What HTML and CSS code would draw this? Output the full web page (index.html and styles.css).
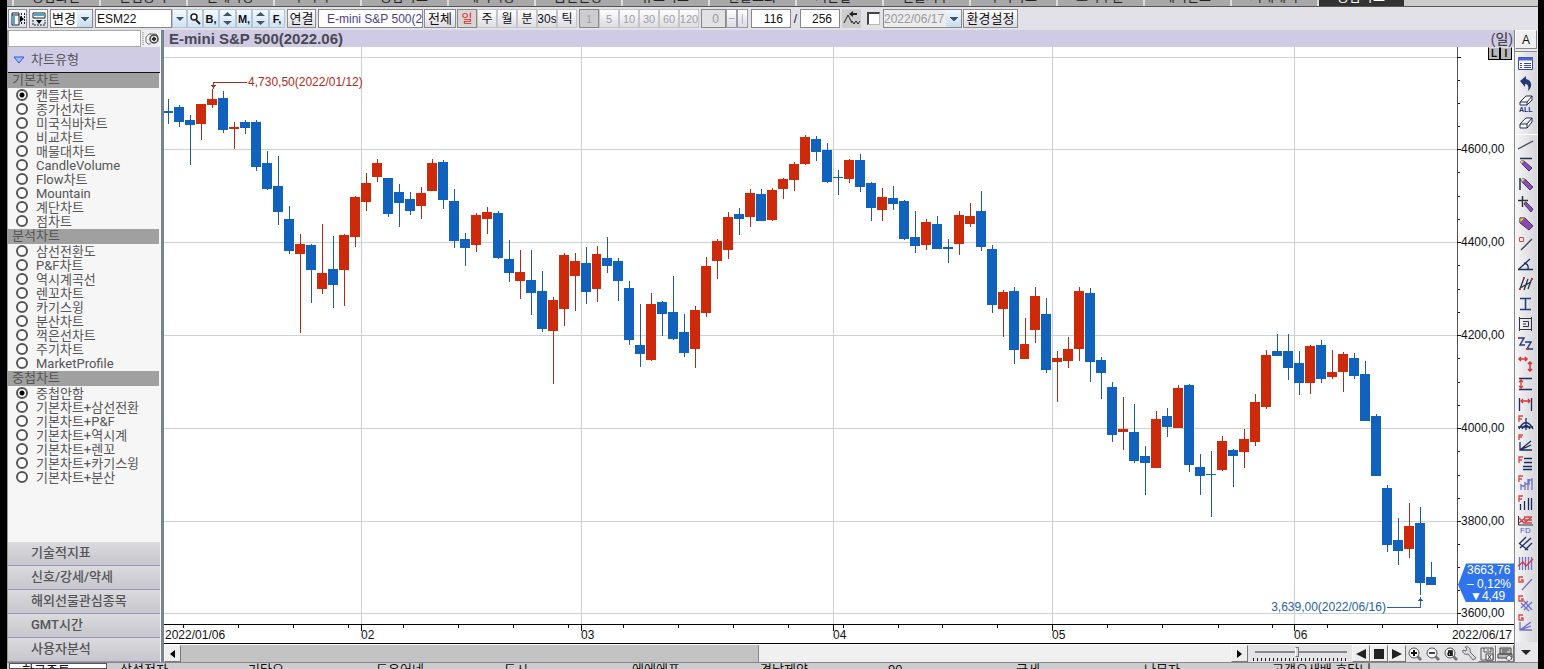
FILE: index.html
```html
<!DOCTYPE html>
<html lang="ko">
<head>
<meta charset="utf-8">
<title>E-mini S&amp;P 500</title>
<link rel="stylesheet" href="styles.css">
</head>
<body>
<div class="app">
  <nav class="tabs">
    <a class="tab" href="#">종합화면</a><a class="tab" href="#">관심종목</a><a class="tab" href="#">현재가창</a><a class="tab" href="#">주식시</a><a class="tab" href="#">종합차트</a><a class="tab" href="#">해외시황</a><a class="tab" href="#">금일일정</a><a class="tab" href="#">뉴스속보</a><a class="tab" href="#">환율조회</a><a class="tab" href="#">기간별</a><a class="tab" href="#">선물지수</a><a class="tab" href="#">주가차트</a><a class="tab" href="#">호가주문</a><a class="tab" href="#">해외잔고</a><a class="tab" href="#">거래내역</a><a class="tab active" href="#">종합차트</a>
    <span class="tab-end"></span>
  </nav>

  <header class="toolbar">
    <button class="btn sq" aria-label="패널 열기"><svg width="16" height="16"><path d="M2 2h7v12H2zM2 4h7" fill="#fff" stroke="#123"/><path d="M3 3h2v10H3z" fill="#4aa8c8"/><path d="M11.500 2v12M14.500 2v12" stroke="#123" stroke-dasharray="2 1"/><path d="M10 5l4 3-4 3z"/></svg></button>
    <button class="btn sq" aria-label="패널 내리기"><svg width="16" height="16"><path d="M2 2h12v5H2z" fill="#fff" stroke="#123"/><path d="M3 3h10v2H3z" fill="#4aa8c8"/><path d="M2 9v5h12V9" fill="none" stroke="#123" stroke-dasharray="2 1"/><path d="M5 9h6l-3 4z"/></svg></button>
    <select class="combo change" aria-label="변경"><option>변경</option></select>
    <input class="field code" aria-label="종목코드" value="ESM22"><button class="btn blue arrow" aria-label="종목 목록"><svg width="8" height="4"><path d="M0 0h8L4 4z" fill="#456"/></svg></button><button class="btn blue s15" aria-label="검색"><svg width="12" height="14"><circle cx="5" cy="5" r="3" fill="#fff" stroke="#222" stroke-width="1.5"/><path d="M7 8l4 4" stroke="#222" stroke-width="2"/></svg></button><button class="btn blue s15">B,</button><button class="btn blue spin" aria-label="B 조정"><svg width="9" height="13"><path d="M0 4h9L4.500 0zM0 9h9l-4.500 4z" fill="#456"/></svg></button><button class="btn blue s15">M,</button><button class="btn blue spin" aria-label="M 조정"><svg width="9" height="13"><path d="M0 4h9L4.500 0zM0 9h9l-4.500 4z" fill="#456"/></svg></button><button class="btn blue s15">F,</button>
    <button class="btn link">연결</button>
    <input class="field name" aria-label="종목명" value="E-mini S&amp;P 500(2022.06)">
    <button class="btn all">전체</button>
    <div class="group"><button class="btn p on">일</button><button class="btn p">주</button><button class="btn p">월</button><button class="btn p">분</button><button class="btn p">30s</button><button class="btn p">틱</button></div>
    <div class="group off"><button class="btn p on" disabled>1</button><button class="btn p" disabled>5</button><button class="btn p" disabled>10</button><button class="btn p" disabled>30</button><button class="btn p" disabled>60</button><button class="btn p" disabled>120</button></div>
    <div class="stepper"><input class="field zero" aria-label="분 단위" value="0" disabled><button class="btn tiny" aria-label="감소">─</button><button class="btn tiny" aria-label="증가">│</button></div>
    <input class="field num" aria-label="표시 개수" value="116"><span class="slash">/</span><input class="field num" aria-label="전체 개수" value="256">
    <button class="btn sq wave" aria-label="갱신"><svg width="18" height="17"><path d="M1 13l4-8 4 8M9 11l2 3 2-3 2 3 2-3" fill="none" stroke="#222"/><path d="M8 3h6v2H8zM10 1v6L6 4z" fill="#222"/></svg></button>
    <input class="check" type="checkbox" aria-label="기준일 사용">
    <select class="combo date" aria-label="기준일" disabled><option>2022/06/17</option></select>
    <button class="btn prefs">환경설정</button>
  </header>

  <div class="work">
    <aside class="sidebar">
      <div class="search"><input aria-label="차트 검색"><button aria-label="찾기"><svg width="18" height="16"><path d="M1 1v14" stroke="#777" stroke-dasharray="1 1"/><path d="M9 3H7L4 6v5l2 2h3M8 3h6l2 2" fill="none" stroke="#777"/><circle cx="12" cy="8" r="4" fill="#ddd" stroke="#444" stroke-width="1.5"/><path d="M10 8h4M12 6v4" stroke="#333" stroke-width="2"/></svg></button></div>
      <h2 class="side-title"><svg width="12" height="8"><path d="M1 1h10l-5 6z" fill="#9cc0f8" stroke="#3657d0"/></svg>차트유형</h2>
      <div class="lists">
        <h3>기본차트</h3>
        <ul>
          <li><label><input type="radio" name="kind" checked>캔들차트</label></li>
          <li><label><input type="radio" name="kind">종가선차트</label></li>
          <li><label><input type="radio" name="kind">미국식바차트</label></li>
          <li><label><input type="radio" name="kind">비교차트</label></li>
          <li><label><input type="radio" name="kind">매물대차트</label></li>
          <li><label><input type="radio" name="kind">CandleVolume</label></li>
          <li><label><input type="radio" name="kind">Flow차트</label></li>
          <li><label><input type="radio" name="kind">Mountain</label></li>
          <li><label><input type="radio" name="kind">계단차트</label></li>
          <li><label><input type="radio" name="kind">점차트</label></li>
        </ul>
        <h3>분석차트</h3>
        <ul>
          <li><label><input type="radio" name="kind">삼선전환도</label></li>
          <li><label><input type="radio" name="kind">P&amp;F차트</label></li>
          <li><label><input type="radio" name="kind">역시계곡선</label></li>
          <li><label><input type="radio" name="kind">렌꼬차트</label></li>
          <li><label><input type="radio" name="kind">카기스윙</label></li>
          <li><label><input type="radio" name="kind">분산차트</label></li>
          <li><label><input type="radio" name="kind">꺽은선차트</label></li>
          <li><label><input type="radio" name="kind">주기차트</label></li>
          <li><label><input type="radio" name="kind">MarketProfile</label></li>
        </ul>
        <h3>중첩차트</h3>
        <ul>
          <li><label><input type="radio" name="over" checked>중첩안함</label></li>
          <li><label><input type="radio" name="over">기본차트+삼선전환</label></li>
          <li><label><input type="radio" name="over">기본차트+P&amp;F</label></li>
          <li><label><input type="radio" name="over">기본차트+역시계</label></li>
          <li><label><input type="radio" name="over">기본차트+렌꼬</label></li>
          <li><label><input type="radio" name="over">기본차트+카기스윙</label></li>
          <li><label><input type="radio" name="over">기본차트+분산</label></li>
        </ul>
      </div>
      <button class="acc">기술적지표</button>
      <button class="acc">신호/강세/약세</button>
      <button class="acc">해외선물관심종목</button>
      <button class="acc">GMT시간</button>
      <button class="acc">사용자분석</button>
    </aside>

    <main class="chart">
      <div class="chart-title"><h1>E-mini S&amp;P 500(2022.06)</h1><span>(일)</span></div>
      <div class="chart-body">
        <div class="plot">
          <svg id="plot" viewBox="0 0 1293 577" preserveAspectRatio="none"></svg>
          <span class="note high">4,730,50(2022/01/12)</span>
          <span class="note low">3,639,00(2022/06/16)</span>
        </div>
        <div class="yaxis">
          <svg id="yticks" viewBox="0 0 57 577" preserveAspectRatio="none"></svg>
          <div id="ylabels"></div>
          <div class="mini"><button>L</button><button>I</button></div>
          <div class="price"><b>3663,76</b><b>– 0,12%</b><b>▼4,49</b></div>
        </div>
      </div>
      <div class="xaxis">
        <svg id="xticks" viewBox="0 0 1350 19" preserveAspectRatio="none"></svg>
        <div id="xlabels"></div>
        <span class="last">2022/06/17</span>
      </div>
      <div class="controls">
        <button class="cb" aria-label="왼쪽"><svg width="5" height="8"><path d="M5 0v8L0 4z"/></svg></button><div class="track"><div class="thumb"></div></div><button class="cb" aria-label="오른쪽"><svg width="5" height="8"><path d="M0 0v8l5-4z"/></svg></button>
        <div class="zoom"><input type="range" aria-label="확대" value="46"></div>
        <button class="cb big" aria-label="뒤로"><svg width="10" height="10"><path d="M10 0v10L0 5z" fill="#222"/></svg></button><button class="cb big" aria-label="정지"><svg width="10" height="10"><path d="M0 0h10v10H0z" fill="#222"/></svg></button><button class="cb big" aria-label="앞으로"><svg width="10" height="10"><path d="M0 0v10l10-5z" fill="#222"/></svg></button>
        <button class="cb ic" aria-label="확대"><svg width="16" height="16"><path d="M10 10l4 4" stroke="#777" stroke-width="3"/><circle cx="7" cy="7" r="5" fill="#f6f6f6" stroke="#555"/><path d="M4 7h6M7 4v6" stroke="#111" stroke-width="2"/></svg></button>
        <button class="cb ic" aria-label="축소"><svg width="16" height="16"><path d="M10 10l4 4" stroke="#777" stroke-width="3"/><circle cx="7" cy="7" r="5" fill="#f6f6f6" stroke="#555"/><path d="M4 7h6" stroke="#444" stroke-width="2"/></svg></button>
        <button class="cb ic" aria-label="전체 보기"><svg width="16" height="16"><path d="M10 10l4 4" stroke="#777" stroke-width="3"/><circle cx="7" cy="7" r="5" fill="#f6f6f6" stroke="#555"/><circle cx="6.500" cy="8" r="1.500" fill="none" stroke="#000" stroke-width="1.500"/><path d="M5 5h4v5" fill="none" stroke="#000" stroke-width="1.500"/></svg></button>
        <button class="cb ic" aria-label="설정"><svg width="16" height="16"><path d="M4 1l2 2-1 2-3-1c-1 3 2 5 5 4l5 6 3-2-6-6c1-3-1-6-5-5z" fill="#ddd" stroke="#666"/></svg></button>
        <button class="cb ic box" aria-label="저장"><svg width="16" height="16"><path d="M2 2h12v12H2zM5 2v4h7V2M9 3v2" fill="none" stroke="#555"/><path d="M7 8h7v6H7z" fill="#fff" stroke="#444"/><path d="M9 9l3 4M12 9l-3 4" stroke="#333"/></svg></button>
        <button class="cb ic box" aria-label="인쇄"><svg width="16" height="16"><path d="M3 2h11v6H3zM1 8h14v4H1z" fill="#bbb" stroke="#444"/><path d="M5 4h7M5 6h5" stroke="#444"/><circle cx="12" cy="12" r="2.500" fill="#eee" stroke="#222" stroke-dasharray="2 1"/></svg></button>
      </div>
    </main>

    <aside class="tools">
      <button class="a-btn">A</button>
      <div class="tool-list">
        <button aria-label="목록"><svg><path d="M2.500 3.500h14v12h-14z" fill="#fff" stroke="#3b4a9c"/><path d="M2 5h15" stroke="#4b63d8" stroke-width="3"/><path d="M4 9.500h2M8 9.500h7M4 11.500h2M8 11.500h7M4 13.500h2M8 13.500h7" stroke="#3b4a9c"/></svg></button>
        <button aria-label="되돌리기"><svg><path d="M4 7l6-5v3c6 1 7 8 2 12 1-5 0-7-3-7v3z" fill="#23397c"/></svg></button>
        <button aria-label="모두 지우기"><svg><path d="M4 8l6-6h6l-5 6zM4 8v3h7V8M11 11l5-5V2" fill="#fff" stroke="#222b55"/><text x="3" y="18" font-size="7" font-weight="700" fill="#26347c" font-family="Liberation Sans">ALL</text></svg></button>
        <button aria-label="지우기"><svg><path d="M4 10l6-6h6l-5 6zM4 10v4h7l5-6V4M11 10v4" fill="#fff" stroke="#222b55"/></svg></button>
        <button class="sep" aria-label="추세선"><svg><path d="M2 14L17 6" stroke="#445" stroke-width="1.300"/></svg></button>
        <button aria-label="수평선"><svg><path d="M4 4.500h12" stroke="#234" stroke-width="1.500"/><path class="pen" d="M5 7h3l8 7-3 3-8-8z"/><path d="M5 7h3l-3 3z" fill="#f4d24c"/></svg></button>
        <button aria-label="수직선"><svg><path d="M4 4v12" stroke="#234" stroke-width="1.500"/><path class="pen" d="M6 5h3l8 8-3 3-8-8z"/><path d="M6 5h3l-3 3z" fill="#f4d24c"/></svg></button>
        <button aria-label="십자선"><svg><path d="M2 6.500h10M6.500 2v11" stroke="#234" stroke-width="1.500"/><path class="pen" d="M8 8h2l7 7-2 3-7-8z"/><path d="M7 7h3l-3 3z" fill="#f4d24c"/></svg></button>
        <button aria-label="연필"><svg><path d="M4 4h5l8 8-4 4-9-7z" fill="#8848b8" stroke="#533"/><path d="M4 4h5L4 9z" fill="#f4d24c" stroke="#765"/></svg></button>
        <button aria-label="사선"><svg><path d="M3.500 3.500h4v4h-4z" stroke="#d44"/><path d="M5 16L16 5" stroke="#445" stroke-width="1.300"/></svg></button>
        <button aria-label="각도"><svg class="navy"><path d="M2 15.500h15M3 15L14 5M8 9q5 1 4 6"/></svg></button>
        <button aria-label="평행선"><svg><path d="M4 15L8 4M8 16l4-11M12 15l4-11M4 14l11-6" stroke="#234" stroke-width="1.300"/><path d="M7 3h2v2H7zM3 14h2v2H3zM15 4h2v2h-2z" fill="#c33"/></svg></button>
        <button aria-label="구간"><svg><path d="M4 4.500h11M4 15.500h11M9.500 4v12" stroke="#223b78" stroke-width="1.500"/></svg></button>
        <button aria-label="사각형"><svg><path d="M3.500 3v14M15.500 3v14M3 4.500h13M3 15.500h13M7 7.500h5.500v5H7M7 10h3" stroke="#334"/></svg></button>
        <button aria-label="지그재그"><svg><path d="M3 4h5l-4 7h5M9 8h6l-4 7h6" stroke="#223b78" stroke-width="1.500"/><path d="M2 3h2v2H2zM10 14h2v2h-2z" fill="#d33"/></svg></button>
        <button aria-label="이동"><svg class="red"><path d="M3 5h8M5 3L3 5l2 2M9 3l2 2-2 2M14 8v9M12 10l2-2 2 2M12 15l2 2 2-2"/></svg></button>
        <button aria-label="높이"><svg class="navy"><path d="M3 4.500h13M3 15.500h13"/><path d="M5 6v8M3 8l2-2 2 2M3 12l2 2 2-2" stroke="#d33"/></svg></button>
        <button aria-label="너비"><svg class="navy"><path d="M3.500 4v13M15.500 4v13"/><path d="M5 7h9M7 5L5 7l2 2M12 5l2 2-2 2" stroke="#d33"/></svg></button>
        <button aria-label="피보나치 호"><svg class="navy"><path d="M3 15q7-13 14 0M6 15q4-7 8 0M10 4v12M2 13h15"/><path class="f" d="M3 8V2h4M3 5h3"/></svg></button>
        <button aria-label="피보나치 팬"><svg class="navy"><path d="M4 8v8h12M4 16L15 7M4 16l11-5"/><path class="f" d="M3 6V1h4M3 3h3"/></svg></button>
        <button aria-label="피보나치 되돌림"><svg class="navy"><path d="M8 4.500h8M8 8.500h8M7 12.500h9M7 15.500h9"/><path class="f" d="M3 9V3h4M3 6h3"/></svg></button>
        <button aria-label="피보나치 파동"><svg class="vio"><path d="M5 16v-6M9 16V8M5 12h4M9 10h4V5M12 5v11M16 4v12M12 6h4"/><path class="f" d="M3 8V2h4M3 5h3"/></svg></button>
        <button aria-label="피보나치 시간"><svg class="navy"><path d="M4.500 10v6M8.500 7v9M12.500 4v12M15.500 4v12"/><path class="f" d="M3 8V2h4M3 5h3"/></svg></button>
        <button aria-label="갠 밴드"><svg><path d="M2.500 2v9H17" stroke="#235"/><path d="M3 4l5 5 8-6M8 3h8M8 6h8M8 9h8M3 9l6-5" stroke="#d44" stroke-width="1.500"/><text x="4" y="19" font-size="8" fill="#55c" font-family="Liberation Sans">FD</text></svg></button>
        <button aria-label="채널"><svg class="navy"><path d="M3 10l7-7M4 14L15 4M9 16l7-7M4 10l8 6"/></svg></button>
        <button aria-label="회귀"><svg class="vio"><path d="M3.500 3v13M6.500 3v13M9.500 3v13M12.500 3v13M15.500 3v13"/><path d="M2 12l5-4 3 4 7-7" stroke="#d33"/></svg></button>
        <button aria-label="갠 라인"><svg class="vio"><path d="M6 16L16 5"/><path class="f" d="M7 3H3v5h4V6H5"/></svg></button>
        <button aria-label="갠 그리드"><svg class="vio"><path d="M8 7l8 9M5 9l8 8M8 16l8-8M5 14l7-7"/><path class="f" d="M7 2H3v5h4V5H5"/></svg></button>
        <button aria-label="갠 팬"><svg class="vio"><path d="M4 8v8h12M4 16L15 8M4 16l11-4"/><path class="f" d="M7 1H3v5h4V4H5"/></svg></button>
      </div>
      <button class="more" aria-label="더 보기"><svg width="10" height="5"><path d="M0 0h10L5 5z" fill="#222"/></svg></button>
    </aside>
  </div>

  <footer class="ticker"><span class="tick-combo">한국증투</span><span>삼성전자</span><span>기타요</span><span>도우어네</span><span>도시</span><span>에에에프</span><span>경남제약</span><span>90</span><span>국세</span><span>나무자</span><span>고객요새배 호타니</span></footer>
</div>
<script src="script.js"></script>
</body>
</html>
```
FILE: styles.css
```css
* { box-sizing: border-box; }
html, body { height: 100%; margin: 0; }
body { background: #000; font: 12px/14px "Liberation Sans", "Noto Sans CJK KR", sans-serif; color: #111; }
button, input, select { font: inherit; color: inherit; margin: 0; padding: 0; border-radius: 0; }
button { display: flex; align-items: center; justify-content: center; white-space: nowrap; overflow: hidden; }
svg { display: block; flex: none; }
h1, h2, h3, ul { margin: 0; padding: 0; list-style: none; font: inherit; }

.app { display: flex; flex-direction: column; height: 100vh; margin: 0 6px 0 7px; overflow: hidden; background: #e2e1e8; }

.tabs { display: flex; align-items: flex-end; height: 7px; flex: none; padding-left: 5px; overflow: hidden; background: #aaa; border-bottom: 1px solid #555; }
.tab { flex: none; width: 87px; height: 20px; padding: 4px 0 0 18px; font-size: 13px; color: #222; text-decoration: none; background: #a8a8a8; border-left: 2px solid #ddd; }
.tab.active { background: #333; color: #fff; }
.tab-end { flex: 1; height: 7px; background: #ccc; }

.toolbar { display: flex; align-items: center; height: 23px; flex: none; padding-left: 1px; }
.btn { height: 19px; border: 1px solid #8c8c92; background: linear-gradient(#fff, #dcdce2); flex: none; }
.sq { width: 19px; margin-right: 2px; }
.combo { height: 19px; appearance: none; border: 1px solid #888; flex: none; background-color: #fff; background-size: 4px 4px, 4px 4px, 15px 100%; background-position: right 7px center, right 3px center, right; background-repeat: no-repeat; background-image: linear-gradient(-135deg, #456 50%, transparent 51%), linear-gradient(135deg, #456 50%, transparent 51%), linear-gradient(#eef7ff, #c8dded); }
.change { width: 43px; margin-right: 2px; padding-left: 1px; font-size: 13px; }
.field { height: 19px; border: 1px solid #888; background: #fff; flex: none; min-width: 0; }
.code { width: 77px; padding-left: 1px; }
.blue { background: linear-gradient(#f4faff, #cfe3f4); border-color: #b4c4d4; font-weight: 700; font-size: 11px; }
.arrow { width: 15px; }
.s15 { width: 16px; }
.spin { width: 17px; }
.link { width: 29px; margin: 0 2px; font-size: 13px; }
.name { width: 105px; padding-left: 8px; color: #4c3d86; margin-right: 1px; }
.all { width: 32px; margin-right: 1px; font-size: 13px; }
.group { display: flex; margin-right: 2px; }
.p { width: 20px; border-color: #c4c4c8; font-size: 11px; }
.group:not(.off) .p { font-size: 12px; }
.p.on { background: #d9d5d6; border-color: #888; color: #d22; }
.off .p, .off .p.on { color: #a0a0a4; }
.off .p.on { background: #cdcdcf; }
.stepper { display: flex; margin-right: 3px; }
.zero { width: 25px; padding-right: 6px; text-align: right; color: #999; background: #e2e2e4; }
.tiny { width: 11px; color: #88a; font-size: 8px; border-color: #99a; }
.num { width: 40px; padding-right: 7px; text-align: right; }
.slash { width: 9px; text-align: center; }
.wave { margin: 0 6px 0 2px; background: #ccc; border-color: #ccc; }
.check { appearance: none; width: 13px; height: 13px; flex: none; margin-right: 3px; background: #fff; border: 2px solid #444; border-right: 1px solid #bbb; border-bottom: 1px solid #bbb; }
.date { width: 79px; color: #999; opacity: 1; background-color: #ececee; margin-right: 1px; }
.prefs { width: 55px; font-size: 13px; }

.work { display: flex; flex: 1; min-height: 0; }

.sidebar { display: flex; flex-direction: column; width: 154px; flex: none; color: #555; font: 13px/14px Roboto, "Noto Sans CJK KR", sans-serif; background: #f6f6f7; border-left: 1px solid #999; border-right: 1px solid #f6f6f7; }
.search { display: flex; height: 17px; flex: none; }
.search input { flex: 1; min-width: 0; border: 1px solid #aaa; background: #fff; }
.search button { width: 19px; border: 0; background: #eee; }
.side-title { display: flex; align-items: center; gap: 6px; height: 26px; flex: none; padding-left: 5px; background: #d0cce6; border-bottom: 1px solid #111; }
.lists { flex: 1; min-height: 0; overflow: hidden; padding-right: 1px; }
.lists h3 { height: 15px; line-height: 14px; padding-left: 4px; background: #a0a0a0; }
.lists li { height: 14px; }
.lists ul { padding-bottom: 1px; }
.lists label { display: flex; align-items: center; height: 14px; line-height: 13px; gap: 8px; padding-left: 8px; white-space: nowrap; }
.lists input { appearance: none; width: 12px; height: 12px; flex: none; border: 2px solid #555; border-radius: 50%; background: #fff; }
.lists input:checked { background: radial-gradient(#000 2px, #fff 3px); }
.acc { height: 24px; flex: none; justify-content: flex-start; padding: 0 0 1px 23px; border: 0; border-bottom: 1px solid #9c98bc; background: linear-gradient(#dadadf, #c6c6cc); font-weight: 500; }

.chart { display: flex; flex-direction: column; flex: 1; min-width: 0; border-left: 3px solid #76868e; }
.chart-title { display: flex; justify-content: space-between; align-items: center; height: 17px; flex: none; padding: 0 1px 0 5px; background: #cfcbe4; color: #4a4854; font-weight: 700; font-size: 15px; }
.chart-title span { font-weight: 500; font-size: 14px; }
.chart-body { display: flex; flex: 1; min-height: 0; background: #fff; }
.plot { position: relative; flex: 1; min-width: 0; }
.plot svg, .yaxis svg, .xaxis svg { position: absolute; inset: 0; width: 100%; height: 100%; shape-rendering: crispEdges; }
.note { position: absolute; transform: translateY(-50%); }
.high { left: 6.5%; top: 6%; color: #b02a20; }
.low { right: 5.5%; top: 97%; color: #2464a4; }
.yaxis { position: relative; width: 57px; flex: none; }
.yaxis span { position: absolute; left: 4px; transform: translateY(-50%); }
.mini { position: absolute; top: 0; right: 2px; display: flex; }
.mini button { width: 12px; height: 13px; border: 1px solid #000; border-top-color: #ddd; background: #b8b8b8; font-weight: 700; font-size: 10px; line-height: 10px; }
.price { position: absolute; top: 89.5%; left: 1px; right: 0; height: 39px; display: flex; flex-direction: column; padding-left: 9px; color: #fff; background: #2f74ee; clip-path: polygon(8px 0, 100% 0, 100% 100%, 8px 100%, 0 55%); }
.price b { font-weight: 400; line-height: 12px; white-space: nowrap; }
.price b:first-child { line-height: 15px; }
.price b:last-child { padding-left: 3px; }
.xaxis { position: relative; height: 20px; flex: none; background: #fff; border-top: 1px solid #000; border-bottom: 1px solid #000; }
.xaxis span { position: absolute; top: 3px; }
.xaxis .last { right: 2px; }

.controls { display: flex; height: 18px; flex: none; background: #e4e4e6; border-top: 1px solid #fff; }
.cb { width: 17px; flex: none; border: 1px solid #f8f8f8; border-right-color: #777; border-bottom-color: #777; background: #eee; color: #111; }
.track { flex: 1; background: #f0f0f1; }
.thumb { width: 55%; height: 100%; background: #c3c3c4; border-right: 1px solid #888; }
.zoom { width: 101px; padding: 2px 2px 0 4px; margin-left: 3px; background: repeating-linear-gradient(90deg, #222 0 1px, transparent 1px 4px) no-repeat 2px 13px / 95px 3px; }
.zoom input { display: block; width: 92px; height: 10px; appearance: none; background: linear-gradient(#888, #888) no-repeat center / 100% 2px; }
.zoom input::-webkit-slider-thumb { appearance: none; width: 4px; height: 10px; background: #ddd; border: 1px solid #777; border-left-color: #fff; }
.big { width: 18px; }
.ic { width: 18px; border-color: transparent; background: transparent; }
.box { border-color: #eee #777 #777 #eee; }

.tools { display: flex; flex-direction: column; width: 24px; flex: none; padding-right: 1px; border-left: 1px solid #888; background: #ececef; }
.a-btn { height: 19px; flex: none; border: 1px solid #fff; border-right-color: #888; border-bottom-color: #888; background: #f0f0f0; }
.tool-list { flex: 1; min-height: 0; overflow: hidden; padding-top: 2px; margin-top: 2px; border-top: 1px solid #888; background: linear-gradient(90deg, #f7f7f8, #d4d4da); }
.tool-list button { width: 100%; height: 20px; border: 0; background: none; }
.tool-list .sep { border-top: 1px solid #fff; }
.tool-list svg { width: 20px; height: 20px; overflow: visible; fill: none; stroke-width: 1; }
.tool-list text { stroke: none; }
.pen { fill: #8650b4; stroke: #53306c; }
.tool-list .red { stroke: #d33; stroke-width: 1.5; }
.tool-list .navy { stroke: #1c2c60; stroke-width: 1.3; }
.tool-list .vio { stroke: #7070c8; stroke-width: 1.3; }
.f { stroke: #d44; }
.more { height: 20px; flex: none; border: 0; background: #e8e8ea; }

.ticker { display: flex; height: 7px; flex: none; overflow: hidden; padding-left: 2px; background: #cdcdcf; border-top: 1px solid #888; font-size: 13px; line-height: 14px; }
.ticker span { flex: none; width: 128px; white-space: nowrap; }
.ticker .tick-combo { width: 98px; margin-right: 13px; padding-left: 12px; background: #fff; border: 1px solid #555; }
```
FILE: script.js
```js
// Each candle: direction (1 up, 0 down), high, body top, body bottom, low.
const candles = [
[0,52,64,66,77],[0,58,60,75,80],[0,68,73,78,118],[1,57,57,77,93],[1,42,52,58,61],[0,44,51,83,86],
[1,75,80,82,102],[0,73,75,81,87],[0,73,75,120,124],[0,104,116,142,143],[0,109,139,165,178],[0,159,172,204,207],
[1,187,197,207,286],[0,197,198,223,256],[1,177,226,242,247],[0,189,222,238,261],[1,187,188,223,259],[1,149,150,190,200],
[1,126,136,155,164],[1,112,116,130,135],[0,131,131,167,170],[0,137,145,156,180],[0,145,152,164,168],[1,140,146,159,172],
[1,112,116,144,144],[0,113,115,153,162],[0,142,154,194,201],[0,186,192,201,219],[1,166,168,198,205],[1,160,165,172,187],
[0,164,166,211,212],[0,193,212,226,235],[1,203,225,234,252],[0,203,233,246,268],[0,224,244,282,285],[1,250,253,284,337],
[1,206,208,262,279],[1,206,214,229,264],[0,200,216,245,257],[1,199,207,242,255],[0,190,211,219,226],[0,211,214,234,254],
[0,234,241,293,298],[0,257,298,307,320],[1,246,257,313,314],[0,254,255,267,289],[0,229,265,292,293],[0,267,285,306,310],
[1,259,263,302,321],[1,210,219,266,270],[1,192,194,214,232],[1,165,170,203,212],[0,161,167,172,188],[1,142,146,170,180],
[0,142,147,174,174],[1,141,143,173,174],[1,131,132,142,152],[1,115,117,133,144],[1,88,90,117,118],[0,89,92,105,114],
[0,96,103,135,136],[0,123,130,131,148],[1,112,113,132,136],[0,107,113,140,145],[0,135,136,161,174],[1,141,150,163,174],
[0,139,151,157,163],[0,153,154,192,193],[0,164,190,199,206],[1,172,175,198,203],[0,169,177,202,202],[0,192,200,202,216],
[1,164,168,197,208],[1,156,169,177,180],[0,144,164,200,204],[0,198,202,258,266],[1,243,245,262,290],[0,240,244,303,317],
[1,271,297,312,312],[1,240,249,283,296],[0,251,267,323,326],[1,304,311,315,355],[1,290,302,314,321],[1,240,244,302,314],
[0,241,246,315,335],[0,310,313,326,352],[0,335,340,388,395],[1,350,382,385,403],[0,357,385,414,416],[0,399,409,416,448],
[1,364,372,421,421],[0,361,369,380,390],[1,338,341,381,381],[0,337,338,418,425],[0,407,420,429,448],[0,404,427,428,470],
[1,389,394,423,424],[0,402,403,409,440],[1,382,392,405,421],[1,347,355,395,399],[1,303,308,360,362],[0,287,304,309,309],
[0,287,304,321,333],[0,304,316,336,348],[1,298,299,336,347],[0,293,298,332,336],[1,303,325,330,332],[1,305,307,325,345],
[0,306,311,329,332],[0,314,327,374,374],[0,367,369,429,429],[0,438,441,498,505],[0,471,493,504,518],[1,456,479,502,511],
[0,460,476,536,548],[0,515,530,538,538]];
const H = 577, W = 1293;
const rows = [10, 102, 195, 288, 381, 474, 566];
const months = [[197, '02'], [417, '03'], [669, '04'], [888, '05'], [1130, '06']];
const rect = (x, y, w, h, c) => `<rect x="${x}" y="${y}" width="${w}" height="${h}" fill="${c}"/>`;

let s = '';
rows.forEach(y => s += rect(0, y, W, 1, '#ccd2d2'));
months.forEach(([x]) => s += rect(x, 0, 1, H, '#cccfd2'));
candles.forEach(([up, hi, top, bot, lo], i) => {
  const x = 11 * i - 1 - (i > 39) - (i > 78);
  const c = up ? '#cc2a0a' : '#1062bc';
  s += rect(x + 5, hi, 1, lo - hi, up ? '#b02a18' : '#1c5c9c') + rect(x, top, i === 39 || i === 78 ? 9 : 10, bot - top, c);
});
s += '<path d="M83 35.5H49.500V40" fill="none" stroke="#b02a20"/><path d="M47 38h5l-2.500 4z" fill="#b02a20"/>';
s += '<path d="M1223 560.500H1256.500V552" fill="none" stroke="#2464a4"/><path d="M1254 554h5l-2.500-4z" fill="#2464a4"/>';
document.getElementById('plot').innerHTML = s;

let t = rect(0, 0, 1, H, '#555');
let labels = '';
rows.forEach((y, i) => {
  t += rect(0, y, 4, 1, '#111');
  for (let k = 1; k < 4 && i < 6; k++) t += rect(1, Math.round(y + (rows[i + 1] - y) * k / 4), 2, 1, '#111');
  if (i) labels += `<span style="top:${y / H * 100}%">${4800 - 200 * i},00</span>`;
});
document.getElementById('yticks').innerHTML = t;
document.getElementById('ylabels').innerHTML = labels;

let u = '';
[19,74,129,184,239,294,349,404,459,514,569,624,679,734,778,833,888,943,998,1054,1108,1163,1218,1273]
  .forEach(x => u += rect(x, 0, 1, 3, '#111'));
let m = '<span style="left:1px">2022/01/06</span>';
months.forEach(([x, name]) => {
  u += rect(x, 0, 1, 6, '#111');
  m += `<span style="left:${x / 1350 * 100}%">${name}</span>`;
});
document.getElementById('xticks').innerHTML = u;
document.getElementById('xlabels').innerHTML = m;
```
